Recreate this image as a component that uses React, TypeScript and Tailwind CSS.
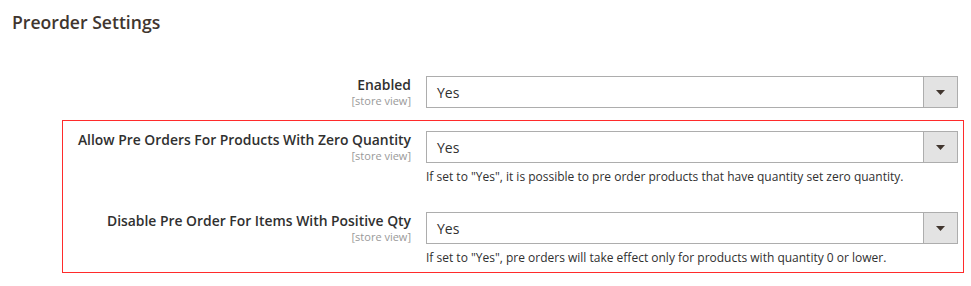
import type { ReactNode } from "react"

// ---------------------------------------------------------------------------
// Pieces
// ---------------------------------------------------------------------------

function SelectBox({ value }: { value: string }) {
  return (
    <div className="flex h-[32px] w-[532px] border border-[#adadad] bg-white">
      <div className="flex flex-1 items-center pl-[10px] text-[14px] text-[#303030]">{value}</div>
      <div className="flex w-[34px] items-center justify-center border-l border-[#adadad] bg-[#e3e3e3]">
        <svg width="9" height="5" viewBox="0 0 9 5">
          <path d="M0 0h9L4.5 5z" fill="#41362f" />
        </svg>
      </div>
    </div>
  )
}

function Row({ label, note, className = "" }: { label: string; note?: ReactNode; className?: string }) {
  return (
    <div className={`flex gap-[15px] ${className}`}>
      <div className="flex w-[348px] flex-col items-end text-right">
        <span className="text-[13.9px] font-semibold leading-[18px] text-[#303030]">{label}</span>
        <span className="text-[11px] leading-[14px] text-[#999]">[store view]</span>
      </div>
      <div className="flex flex-col">
        <SelectBox value="Yes" />
        {note && <div className="mt-[5px] text-[12px] leading-[18px] text-[#303030]">{note}</div>}
      </div>
    </div>
  )
}

// ---------------------------------------------------------------------------
// Page
// ---------------------------------------------------------------------------

export default function App() {
  return (
    <div className="h-[286px] w-[971px] bg-white font-['Open_Sans',sans-serif]">
      <div className="px-3 pt-[10px] text-[17.6px] font-semibold leading-[24px] text-[#41362f]">Preorder Settings</div>

      <div className="mt-[41px] pl-[62px] pr-[7px]">
        <div className="border border-transparent">
          <Row label="Enabled" />
        </div>

        <div className="mt-[11px] border border-[#ff2b2b] pt-[10px] pb-[5px]">
          <Row
            label="Allow Pre Orders For Products With Zero Quantity"
            note={<>If set to "Yes", it is possible to pre order products that have quantity set zero quantity.</>}
          />
          <Row
            className="mt-[26px]"
            label="Disable Pre Order For Items With Positive Qty"
            note={<>If set to "Yes", pre orders will take effect only for products with quantity 0 or lower.</>}
          />
        </div>
      </div>
    </div>
  )
}
